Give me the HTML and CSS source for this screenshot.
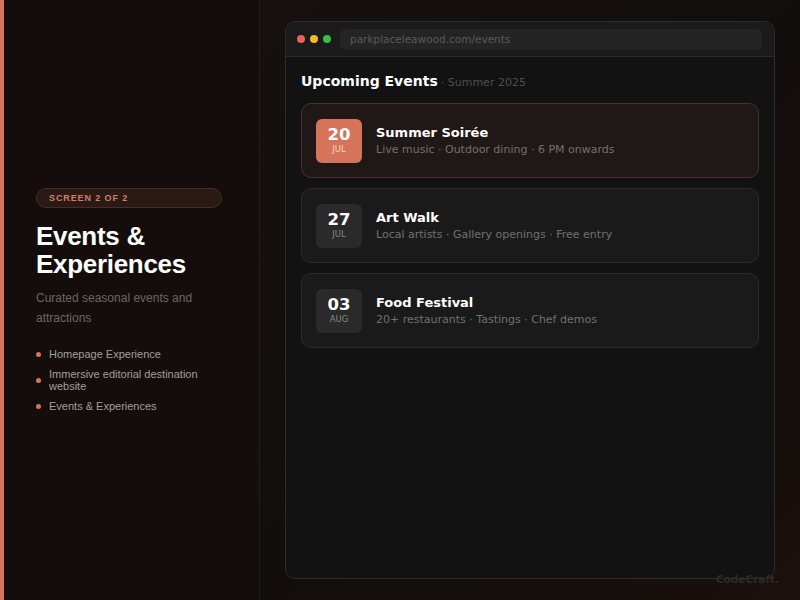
FILE: index.html
```html
<!DOCTYPE html>
<html>
<head>
<meta charset="utf-8">
<link rel="stylesheet" href="styles.css">
</head>
<body>
<div class="page">
  <aside class="side">
    <div class="pill">SCREEN 2 OF 2</div>
    <h1 class="title">Events &amp;<br>Experiences</h1>
    <p class="sub">Curated seasonal events and attractions</p>
    <ul class="list">
      <li>Homepage Experience</li>
      <li>Immersive editorial destination website</li>
      <li>Events &amp; Experiences</li>
    </ul>
  </aside>
  <main class="main">
    <div class="window">
      <div class="bar">
        <span class="dot red"></span><span class="dot yellow"></span><span class="dot green"></span>
        <div class="url">parkplaceleawood.com/events</div>
      </div>
      <div class="content">
        <div class="heading"><span class="h">Upcoming Events</span><span class="season">· Summer 2025</span></div>
        <div class="card active">
          <div class="date"><span class="num">20</span><span class="mon">JUL</span></div>
          <div class="info"><div class="name">Summer Soirée</div><div class="desc">Live music · Outdoor dining · 6 PM onwards</div></div>
        </div>
        <div class="card">
          <div class="date"><span class="num">27</span><span class="mon">JUL</span></div>
          <div class="info"><div class="name">Art Walk</div><div class="desc">Local artists · Gallery openings · Free entry</div></div>
        </div>
        <div class="card">
          <div class="date"><span class="num">03</span><span class="mon">AUG</span></div>
          <div class="info"><div class="name">Food Festival</div><div class="desc">20+ restaurants · Tastings · Chef demos</div></div>
        </div>
      </div>
    </div>
    <div class="brand">CodeCraft.</div>
  </main>
</div>
</body>
</html>
```

FILE: styles.css
```css
* { box-sizing: border-box; }
html, body { margin: 0; padding: 0; }
body {
  width: 800px; height: 600px; overflow: hidden;
  background: #140e0c;
  font-family: "Liberation Sans", Arial, sans-serif;
}
.page { display: flex; height: 600px; }
.side {
  width: 260px; flex: none;
  border-left: 4px solid #d9735a;
  border-right: 1px solid #251c19;
  background: #140d0b;
  padding: 188px 37px 0 32px;
}
.pill {
  height: 20px; border-radius: 10px;
  background: #2a1914;
  border: 1px solid #4a2c23;
  color: #d0806a;
  font-size: 9px; font-weight: 700; letter-spacing: 0.9px;
  line-height: 18px; padding-left: 12px;
}
.title {
  margin: 14px 0 0; color: #fff;
  font-size: 26px; font-weight: 700; line-height: 28px; letter-spacing: -0.3px;
}
.sub {
  margin: 10px 0 0; color: #6e6561; font-size: 12px; line-height: 20px;
}
.list { list-style: none; margin: 20px 0 0; padding: 0; }
.list li {
  position: relative; padding-left: 13px;
  color: #a59e9b; font-size: 11px; line-height: 12px; margin-bottom: 8px;
}
.list li::before {
  content: ""; position: absolute; left: 0; top: 50%; margin-top: -2px;
  width: 5px; height: 5px; border-radius: 50%; background: #d9735a;
}
.main {
  flex: 1; position: relative;
  background: linear-gradient(135deg, #161110 0%, #120e0d 50%, #1a100d 100%);
  padding: 21px 25px 21px 25px;
}
.window {
  height: 558px; background: #121212;
  border: 1px solid #2c2c2c; border-radius: 10px; overflow: hidden;
}
.bar {
  height: 35px; display: flex; align-items: center;
  padding: 0 12px 0 11px; background: #1b1b1b;
  border-bottom: 1px solid #2a2a2a;
}
.dot { width: 8px; height: 8px; border-radius: 50%; margin-right: 5px; flex: none; }
.red { background: #ef5f57; }
.yellow { background: #f4b928; }
.green { background: #2fc244; }
.url {
  flex: 1; margin-left: 4px; height: 21px; border-radius: 6px;
  background: #242424; color: #5a5a5a;
  font-family: "DejaVu Sans", sans-serif; font-size: 10.5px; line-height: 21px;
  padding-left: 10px;
}
.content { padding: 16px 15px 0 15px; font-family: "DejaVu Sans", sans-serif; }
.heading { display: flex; align-items: baseline; margin-bottom: 10px; height: 20px; }
.h { color: #fff; font-weight: 700; font-size: 14px; }
.season { color: #4f4f4f; font-size: 11px; margin-left: 3px; }
.card {
  height: 75px; margin-bottom: 10px; display: flex; align-items: center;
  padding: 0 14px; border-radius: 10px;
  background: #1a1a1a; border: 1px solid #2b2b2b;
}
.card.active { background: #201816; border-color: #4b3128; }
.date {
  width: 46px; height: 44px; border-radius: 6px; flex: none;
  background: #2a2a2a; display: flex; flex-direction: column;
  align-items: center; justify-content: center;
}
.active .date { background: #d6735b; }
.num { color: #fff; font-weight: 700; font-size: 16.5px; line-height: 18px; }
.mon { color: #888; font-size: 8.5px; line-height: 11px; }
.active .mon { color: #f6d6cc; }
.info { margin-left: 14px; }
.name { color: #fff; font-weight: 700; font-size: 13px; line-height: 17px; margin-bottom: 1px; }
.desc { color: #717171; font-size: 11px; line-height: 16px; }
.brand {
  position: absolute; right: 21px; bottom: 15px;
  color: #2f2a28; font-family: "DejaVu Sans", sans-serif;
  font-weight: 700; font-size: 10.5px;
}
```
